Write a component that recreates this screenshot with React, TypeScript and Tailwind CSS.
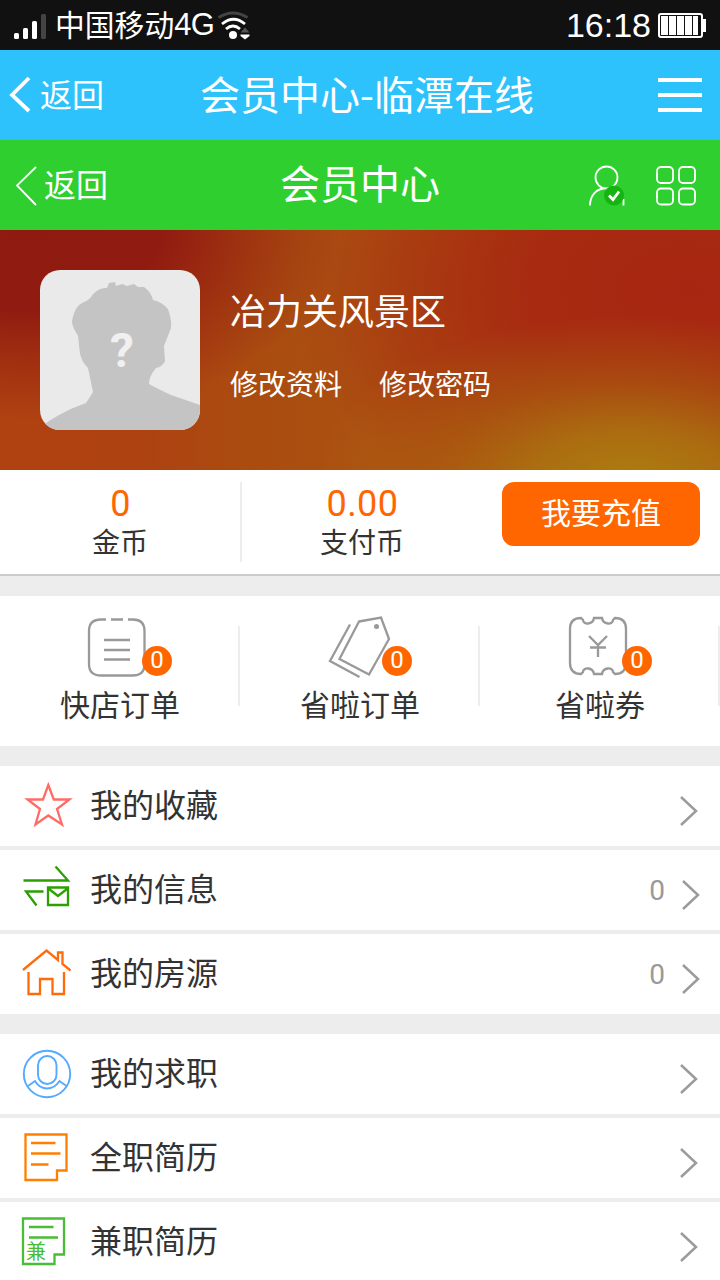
import type { ReactNode } from "react";

function Chevron({ className }: { className: string }) {
  return (
    <svg className={className} width="20" height="32" viewBox="0 0 20 32" fill="none" stroke="#9b9b9b" strokeWidth="2.5">
      <path d="M2 2 17 16 2 30" />
    </svg>
  );
}

function StatusBar() {
  return (
    <div className="flex h-[50px] items-center bg-[#111111] text-white">
      <svg className="ml-3 shrink-0" width="36" height="50" viewBox="12 0 36 50">
        <rect x="14" y="33" width="5" height="6" rx="1.5" fill="#fff" />
        <rect x="23" y="28" width="5" height="11" rx="1.5" fill="#fff" />
        <rect x="32" y="21" width="5" height="18" rx="1.5" fill="#fff" />
        <rect x="41" y="14" width="5" height="25" rx="1.5" fill="#444" />
      </svg>
      <div className="ml-[7px] flex h-[50px] w-[161px] items-center whitespace-nowrap">
        <span className="pb-1 text-[29.8px] leading-[46px]">中国移动</span>
        <span className="font-['Liberation_Sans',sans-serif] text-[31px] leading-[50px] tracking-[-0.7px]">4G</span>
      </div>
      <svg className="shrink-0" width="36" height="50" viewBox="216 0 36 50" fill="none" strokeWidth="2.800">
        <path d="M218.500 17.500Q233 8.500 247.500 17.500" stroke="#444" />
        <path d="M222 24Q233.500 14.500 245 24" stroke="#fff" />
        <path d="M226 29Q233 23 240 29" stroke="#fff" />
        <circle cx="233" cy="35" r="4" fill="#fff" />
        <path d="M240.500 32.500 245 27.500 249.500 32.500Z" fill="#555" />
        <path d="M240.500 34.500H249.500V36L245 39.500 240.500 36Z" fill="#fff" />
      </svg>
      <span className="ml-auto font-['Liberation_Sans',sans-serif] text-[34px] leading-[50px]">16:18</span>
      <svg className="ml-[6px] mr-[14px] shrink-0" width="49" height="50" viewBox="657 0 49 50">
        <rect x="659" y="14" width="43" height="23" rx="2" fill="none" stroke="#fff" strokeWidth="2" />
        <path d="M703 19h3v13h-3zM661 16h7v19h-7zM669 16h7v19h-7zM677 16h7v19h-7zM685 16h7v19h-7zM693 16h5v19h-5z" fill="#fff" />
      </svg>
    </div>
  );
}

function AppBar() {
  return (
    <header className="grid h-[90px] grid-cols-[190px_minmax(0,1fr)_190px] items-center bg-[#2dc2fc] text-white">
      <div className="flex items-center">
        <svg className="ml-2 shrink-0" width="32" height="40" viewBox="8 75 32 40" fill="none" stroke="#fff" strokeWidth="3.8">
          <path d="M29 78 12 95 29 111" />
        </svg>
        <span className="pb-[3px] text-[32px] leading-[45px]">返回</span>
      </div>
      <h1 className="whitespace-nowrap pb-[3px] pl-[10px] text-[40px] leading-[57px]">会员中心-临潭在线</h1>
      <div className="mr-[18px] flex flex-col items-end gap-[10.600px]">
        <div className="h-1 w-11 bg-white" />
        <div className="h-1 w-11 bg-white" />
        <div className="h-1 w-11 bg-white" />
      </div>
    </header>
  );
}

function PageBar() {
  return (
    <header className="grid h-[90px] grid-cols-[190px_minmax(0,1fr)_190px] items-center bg-[#2ecf2e] text-white">
      <div className="flex items-center">
        <svg className="ml-3 shrink-0" width="32" height="44" viewBox="12 162 32 44" fill="none" stroke="#fff" strokeWidth="1.8">
          <path d="M36 166 17 184.500 36 204" />
        </svg>
        <span className="pb-1 text-[32px] leading-[44px]">返回</span>
      </div>
      <h2 className="whitespace-nowrap pb-[5px] text-center text-[40px] leading-[55px]">会员中心</h2>
      <svg width="190" height="90" viewBox="530 140 190 90" fill="none" stroke="#fff" strokeWidth="1.8">
        <circle cx="606.500" cy="177.500" r="11" />
        <path d="M590 205.500C590 196 596 189 604 188.500M623.500 199V205.500" />
        <circle cx="614" cy="195.500" r="10" fill="#16b410" stroke="none" />
        <path d="M609 195.500 613 199.500 619 191.500" strokeWidth="2.8" />
        <rect x="657" y="167" width="16" height="16" rx="4" />
        <rect x="679" y="167" width="16" height="16" rx="4" />
        <rect x="657" y="188.500" width="16" height="16" rx="4" />
        <rect x="679" y="188.500" width="16" height="16" rx="4" />
      </svg>
    </header>
  );
}

function Avatar() {
  return (
    <svg className="h-40 w-40 shrink-0 rounded-[20px]" viewBox="0 0 160 160">
      <rect width="160" height="160" fill="#eaeaea" />
      <path
        d="M5 154Q12 148 33 138L46 133Q50 127 53 122L48 98Q42 92 40 84L38 66Q32 56 32 52Q34 36 44 32Q50 30 53 24Q60 17 67 18L69 13 75 12 76 16 82 14 87 16 94 14 98 17 104 17Q111 22 113 30Q122 32 128 39Q132 50 131 58L124 76 125 91Q122 97 116 98Q109 106 109 114Q118 119 131 125L160 135V160H0Z"
        fill="#c4c4c4"
      />
      <text x="82" y="97" textAnchor="middle" fill="#f0f0f0" className="font-['Roboto',sans-serif] text-[48px] font-bold">
        ?
      </text>
    </svg>
  );
}

function Profile() {
  return (
    <section className="flex h-60 bg-[radial-gradient(ellipse_320px_170px_at_630px_255px,#ad7e10_0%,#ac7610d8_32%,#ab6a1078_62%,#ab601000_100%),radial-gradient(ellipse_310px_190px_at_30px_0px,#8f1b10_0%,#901b10_42%,#941f1090_68%,#982a1000_100%),radial-gradient(ellipse_400px_260px_at_690px_60px,#a72611_0%,#a72811e8_40%,#a72c1190_68%,#a7301100_100%),linear-gradient(90deg,#b04210_0%,#ae4211_20%,#aa4c10_35%,#ab5011_50%,#ab4c10_58%,#a9450f_75%,#a64611_100%)] pl-10 pt-10 text-white">
      <Avatar />
      <div className="ml-[30px] whitespace-nowrap">
        <div className="mt-3 text-[36px] leading-[54px]">冶力关风景区</div>
        <div className="mt-[26px] flex gap-[37px] text-[28px] leading-[42px]">
          <span>修改资料</span>
          <span>修改密码</span>
        </div>
      </div>
    </section>
  );
}

function Balance({ value, label }: { value: string; label: string }) {
  return (
    <div className="w-[240px] text-center">
      <div className="pl-px pt-[2px] font-['Roboto',sans-serif] text-[36px] leading-10 tracking-[0.4px] text-[#ff6600]">{value}</div>
      <div className="-mt-[3px] text-[28px] leading-10">{label}</div>
    </div>
  );
}

function Balances() {
  return (
    <section className="flex h-[106px] border-b-2 border-[#cccccc] bg-white pt-3">
      <div className="h-20 w-[242px] border-r-2 border-[#ededed]">
        <Balance value="0" label="金币" />
      </div>
      <Balance value="0.00" label="支付币" />
      <button className="ml-5 h-16 w-[198px] rounded-xl bg-[#ff6600] pb-[5px] text-[30px] leading-[59px] text-white">我要充值</button>
    </section>
  );
}

function OrderItem({ label, children }: { label: string; children: ReactNode }) {
  return (
    <div className="flex w-60 pt-[30px]">
      <div className="-mt-[30px] flex w-[238px] flex-col items-center">
        <div className="relative ml-[2px] mt-[14px] h-[72px] w-[80px]">
          {children}
          <span className="absolute left-[62px] top-[36px] h-[30px] w-[30px] rounded-full bg-[#ff6600] text-center font-['Roboto',sans-serif] text-[24px] leading-[29px] text-white">
            0
          </span>
        </div>
        <div className="-mt-px ml-[2px] whitespace-nowrap text-[30px] leading-[45px]">{label}</div>
      </div>
      <div className="h-20 w-[2px] bg-[#ededed]" />
    </div>
  );
}

function Orders() {
  return (
    <section className="mt-5 flex h-[150px] bg-white">
      <OrderItem label="快店订单">
        <svg width="80" height="72" viewBox="80 610 80 72" fill="none" stroke="#999" strokeWidth="2.3">
          <path d="M106 619.500H101Q89 619.500 89 631V664Q89 675.500 101 675.500H133Q144.500 675.500 144.500 664V631Q144.500 619.500 133 619.500H128M111 619.500H123M104 640H130M104 650H130M104 659.500H130" />
        </svg>
      </OrderItem>
      <OrderItem label="省啦订单">
        <svg width="80" height="72" viewBox="320 610 80 72" fill="none" stroke="#999" strokeWidth="2.3">
          <path d="M359 621.500 381 617.500 389 639 369 674.500 339.500 659ZM350 624.500 330 661 359.500 677" />
          <circle cx="376.500" cy="626.500" r="2.500" fill="#999" stroke="none" />
        </svg>
      </OrderItem>
      <OrderItem label="省啦券">
        <svg width="80" height="72" viewBox="560 610 80 72" fill="none" stroke="#999" strokeWidth="2.3">
          <path d="M570 629Q570 618 581 618L583 620C583 625 593 625 594 618H602C603 625 613 625 613 620L615 618Q626 618 626 629V663Q626 674 615 674L613 672C613 667 603 667 602 674H594C593 667 583 667 583 672L581 674Q570 674 570 663Z" />
          <path d="M589 636 598 645 607 636M598 645V657M590 647.500H606" />
        </svg>
      </OrderItem>
    </section>
  );
}

function MenuRow({ label, count, children }: { label: string; count?: string; children: ReactNode }) {
  return (
    <li className="flex h-20 shrink-0 bg-white">
      <svg className="ml-4 shrink-0" width="64" height="80" viewBox="16 0 64 80" fill="none" strokeWidth="2.3">
        {children}
      </svg>
      <span className="ml-[10px] whitespace-nowrap text-[32px] leading-[74px]">{label}</span>
      {count === undefined ? (
        <Chevron className="ml-auto mr-[21px] mt-[29px]" />
      ) : (
        <>
          <span className="ml-auto pt-px font-['Roboto',sans-serif] text-[28px] leading-20 text-[#999999]">{count}</span>
          <Chevron className="ml-4 mr-[19px] mt-[29px]" />
        </>
      )}
    </li>
  );
}

function Menu() {
  return (
    <>
      <ul className="mt-5 flex flex-col gap-1">
        <MenuRow label="我的收藏">
          <path stroke="#ff6c67" d="M48.300 19 53.800 33.500H69.500L57 43 62 58.500 48.300 49.500 35.500 58.500 40 43 27.500 33.500H43Z" />
        </MenuRow>
        <MenuRow label="我的信息" count="0">
          <path stroke="#2ba000" d="M23.500 30.500H68L55.500 16.500M43.500 41.500H26L36.500 55.500M48 37.500H68V55H48ZM49 39 58 46 67 39" />
        </MenuRow>
        <MenuRow label="我的房源" count="0">
          <path stroke="#ff6b0a" d="M23 36 46.500 16.500 58 26V18.500H62.500V30L70.500 36.500M28.500 38V60H40V45H52.500V60H64V38" />
        </MenuRow>
      </ul>
      <ul className="mt-5 flex flex-col gap-1">
        <MenuRow label="我的求职">
          <g stroke="#55aaff" strokeWidth="1.9">
            <circle cx="47" cy="40" r="23.200" />
            <rect x="38" y="22" width="18.500" height="28" rx="9.250" />
            <path d="M28 52 35 47C41 57 53 57 59.500 47L66.500 52" />
          </g>
        </MenuRow>
        <MenuRow label="全职简历">
          <path stroke="#ff8000" d="M25.500 16.500H66.500V52.500H57V62H25.500ZM31 25H55.500M31 35.500H60.500M31 46.500H48.500" />
        </MenuRow>
        <MenuRow label="兼职简历">
          <path stroke="#4abc35" d="M23 16.500H64V52.500H54.500V62H23ZM29 25H53.500M29 35.500H58" />
          <text x="26" y="56.500" fill="#4abc35" className="text-[20px]">
            兼
          </text>
        </MenuRow>
      </ul>
    </>
  );
}

export default function App() {
  return (
    <main className="h-[1280px] w-[720px] overflow-hidden bg-[#ededed] font-['Noto_Sans_CJK_SC',sans-serif] text-[#333333]">
      <StatusBar />
      <AppBar />
      <PageBar />
      <Profile />
      <Balances />
      <Orders />
      <Menu />
    </main>
  );
}
